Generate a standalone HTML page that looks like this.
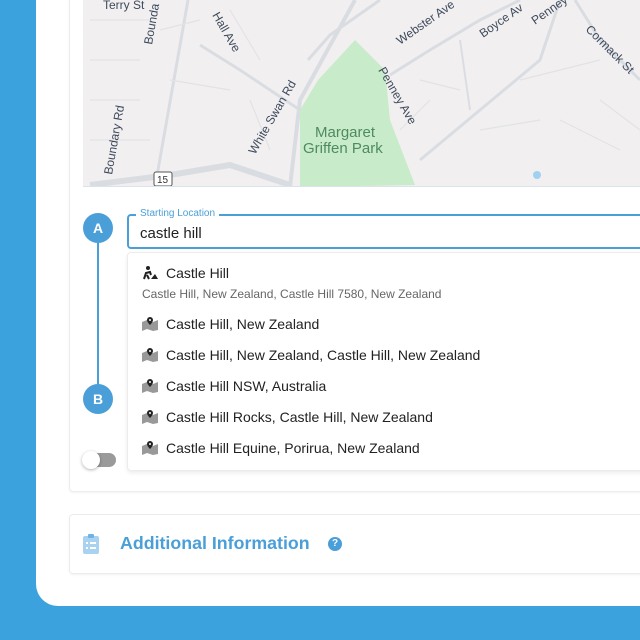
<!DOCTYPE html>
<html><head><style>
*{margin:0;padding:0;box-sizing:border-box}
body{width:640px;height:640px;background:#3ca2de;position:relative;overflow:hidden;font-family:"Liberation Sans",sans-serif}
.panel{position:absolute;left:36px;top:-20px;width:640px;height:626px;background:#fff;border-bottom-left-radius:22px}
.card{position:absolute;left:69px;top:-10px;width:600px;height:502px;border:1px solid #ececec;border-radius:4px;box-shadow:0 1px 2px rgba(0,0,0,.05);background:#fff}
.map{position:absolute;left:83px;top:0;width:557px;height:187px;background:#f2eff0;overflow:hidden;border-bottom:1px solid #d8e4ea}
.circ{position:absolute;width:30px;height:30px;border-radius:50%;background:#4a9fd8;color:#fff;font-weight:bold;font-size:14px;text-align:center;line-height:30px}
.input{position:absolute;left:127px;top:214px;width:540px;height:35px;border:2px solid #4a9fd8;border-radius:4px;font-size:15px;color:#222;padding:9px 0 0 11px}
.lab{position:absolute;left:136px;top:208px;background:#fff;padding:0 4px;font-size:10px;color:#4a9fd8}
.dd{position:absolute;left:127px;top:252px;width:540px;height:219px;border:1px solid #ececec;border-radius:4px;box-shadow:0 2px 4px rgba(0,0,0,.08);background:#fff}
.it{position:absolute;left:166px;font-size:14px;color:#222}
.ic{position:absolute;left:142px;width:16px;height:14px}
.card2{position:absolute;left:69px;top:514px;width:600px;height:60px;border:1px solid #ececec;border-radius:4px;box-shadow:0 1px 2px rgba(0,0,0,.05)}
</style></head><body>
<div class="panel"></div>
<div class="card"></div>
<div class="map">
<svg width="557" height="187" viewBox="83 0 557 187">
<g stroke="#d9dde2" fill="none">
<path d="M90 185 L170 175 L230 165 L290 185" stroke-width="6"/>
<path d="M290 187 L300 100 L355 0" stroke-width="4"/>
<path d="M188 0 L155 187" stroke-width="3"/>
<path d="M200 45 L240 70 L300 110" stroke-width="3"/>
<path d="M308 60 L330 35 L380 0" stroke-width="3"/>
<path d="M390 75 L430 50 L480 20 L520 0" stroke-width="3"/>
<path d="M420 160 L480 110 L540 60 L560 0" stroke-width="3"/>
<path d="M575 0 L600 40 L640 80" stroke-width="3"/>
<path d="M460 40 L470 110" stroke-width="2"/>
<g stroke-width="1.2" stroke="#e1e3e6"><path d="M90 20 H150 M90 60 H140 M90 100 H140 M90 140 H150 M160 30 L200 20 M170 80 L230 90 M230 10 L260 60 M250 100 L270 150 M420 80 L460 90 M480 130 L540 120 M520 80 L600 60 M560 120 L620 150 M600 100 L640 130 M400 130 L430 100"/></g>
</g>
<path d="M355 40 L385 70 L390 120 L415 185 L300 187 L300 110 L318 80 Z" fill="#c8ecc9"/>
<circle cx="537" cy="175" r="4" fill="#9fd2ee"/>
<rect x="154" y="172" width="18" height="14" rx="2" fill="#fff" stroke="#555"/>
<text x="157" y="183" font-size="10" fill="#333" font-family="Liberation Sans">15</text>
<g font-family="Liberation Sans" font-size="12" fill="#3d4a5c">
<text x="103" y="9">Terry St</text>
<text transform="translate(112,175) rotate(-80)">Boundary Rd</text>
<text transform="translate(152,45) rotate(-80)">Bounda</text>
<text transform="translate(212,15) rotate(60)">Hall Ave</text>
<text transform="translate(255,155) rotate(-60)">White Swan Rd</text>
<text transform="translate(378,70) rotate(60)">Penney Ave</text>
<text transform="translate(400,45) rotate(-35)">Webster Ave</text>
<text transform="translate(483,38) rotate(-35)">Boyce Av</text>
<text transform="translate(535,25) rotate(-35)">Penney</text>
<text transform="translate(585,30) rotate(45)">Cormack St</text>
</g>
<g font-family="Liberation Sans" font-size="15" fill="#4f8a5f"><text x="315" y="137">Margaret</text><text x="303" y="153">Griffen Park</text></g>
</svg></div>
<div class="circ" style="left:83px;top:213px">A</div>
<div style="position:absolute;left:97px;top:243px;width:2px;height:143px;background:#4a9fd8"></div>
<div class="circ" style="left:83px;top:384px">B</div>
<div style="position:absolute;left:83px;top:453px;width:33px;height:14px;border-radius:7px;background:#9a9a9a"></div>
<div style="position:absolute;left:82px;top:451px;width:18px;height:18px;border-radius:50%;background:#fff;box-shadow:0 1px 3px rgba(0,0,0,.3)"></div>
<div class="input">castle hill</div>
<div class="lab">Starting Location</div>
<div class="dd"></div>
<div class="it" style="top:265px">Castle Hill</div>
<div style="position:absolute;left:142px;top:287px;font-size:12px;color:#666">Castle Hill, New Zealand, Castle Hill 7580, New Zealand</div>
<div class="it" style="top:316px">Castle Hill, New Zealand</div>
<div class="it" style="top:347px">Castle Hill, New Zealand, Castle Hill, New Zealand</div>
<div class="it" style="top:378px">Castle Hill NSW, Australia</div>
<div class="it" style="top:409px">Castle Hill Rocks, Castle Hill, New Zealand</div>
<div class="it" style="top:440px">Castle Hill Equine, Porirua, New Zealand</div>
<svg class="ic" style="top:266px" viewBox="0 0 16 14"><circle cx="6" cy="2" r="2" fill="#222"/><path d="M2 13 L4 7 L8 6 L9 9 M5 9 L7 13" stroke="#222" stroke-width="2" fill="none"/><path d="M9 13 L13 8 L16 13Z" fill="#222"/></svg>
<svg class="ic" style="top:317px" viewBox="0 0 16 14"><path d="M0 5 L5 3 L11 5 L16 3 V13 L11 14 L5 12 L0 14Z" fill="#999"/><path d="M8 0a3 3 0 0 1 3 3c0 2-3 5-3 5s-3-3-3-5a3 3 0 0 1 3-3z" fill="#222"/><circle cx="8" cy="3" r="1" fill="#fff"/></svg>
<svg class="ic" style="top:348px" viewBox="0 0 16 14"><path d="M0 5 L5 3 L11 5 L16 3 V13 L11 14 L5 12 L0 14Z" fill="#999"/><path d="M8 0a3 3 0 0 1 3 3c0 2-3 5-3 5s-3-3-3-5a3 3 0 0 1 3-3z" fill="#222"/><circle cx="8" cy="3" r="1" fill="#fff"/></svg>
<svg class="ic" style="top:379px" viewBox="0 0 16 14"><path d="M0 5 L5 3 L11 5 L16 3 V13 L11 14 L5 12 L0 14Z" fill="#999"/><path d="M8 0a3 3 0 0 1 3 3c0 2-3 5-3 5s-3-3-3-5a3 3 0 0 1 3-3z" fill="#222"/><circle cx="8" cy="3" r="1" fill="#fff"/></svg>
<svg class="ic" style="top:410px" viewBox="0 0 16 14"><path d="M0 5 L5 3 L11 5 L16 3 V13 L11 14 L5 12 L0 14Z" fill="#999"/><path d="M8 0a3 3 0 0 1 3 3c0 2-3 5-3 5s-3-3-3-5a3 3 0 0 1 3-3z" fill="#222"/><circle cx="8" cy="3" r="1" fill="#fff"/></svg>
<svg class="ic" style="top:441px" viewBox="0 0 16 14"><path d="M0 5 L5 3 L11 5 L16 3 V13 L11 14 L5 12 L0 14Z" fill="#999"/><path d="M8 0a3 3 0 0 1 3 3c0 2-3 5-3 5s-3-3-3-5a3 3 0 0 1 3-3z" fill="#222"/><circle cx="8" cy="3" r="1" fill="#fff"/></svg>
<div class="card2"></div>
<svg style="position:absolute;left:83px;top:533px" width="16" height="21" viewBox="0 0 16 21"><rect x="0" y="3" width="16" height="18" rx="2" fill="#a9d2f0"/><rect x="5" y="1" width="6" height="4" rx="1" fill="#6fb3e3"/><g fill="#fff"><rect x="3" y="9" width="2" height="2"/><rect x="7" y="9" width="6" height="2"/><rect x="3" y="14" width="2" height="2"/><rect x="7" y="14" width="6" height="2"/></g></svg>
<div style="position:absolute;left:120px;top:533px;font-size:17.8px;font-weight:bold;color:#4a9fd8">Additional Information</div>
<div style="position:absolute;left:328px;top:537px;width:14px;height:14px;border-radius:50%;background:#4a9fd8;color:#fff;font-size:10px;font-weight:bold;text-align:center;line-height:14px">?</div>
</body></html>
